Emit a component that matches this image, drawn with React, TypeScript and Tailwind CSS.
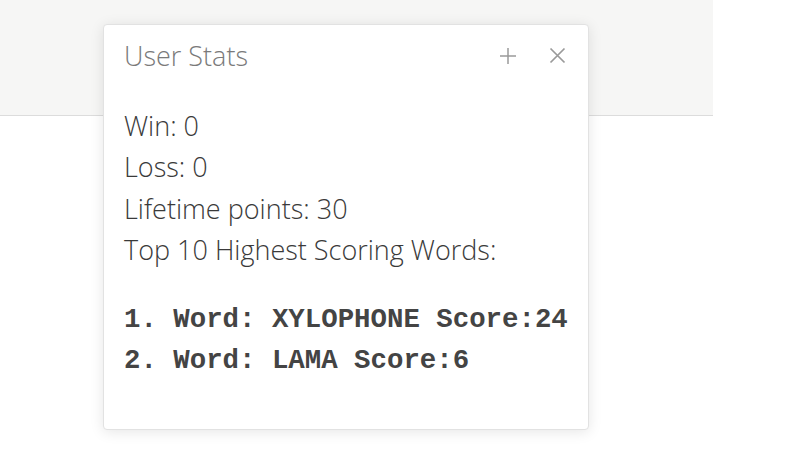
import React from "react";

export default function App() {
  return (
    <div className="relative w-[809px] h-[470px] bg-white overflow-hidden" style={{ fontFamily: '"Open Sans", sans-serif' }}>
      <div className="w-[713px] h-[116px] bg-[#f6f6f5] border-b border-[#dcdcdc]" />
      <div className="absolute left-[103px] top-[24px] w-[486px] h-[406px] bg-white rounded-[4px] border border-[#e2e2e2] shadow-[0_2px_14px_rgba(0,0,0,0.10)] px-[20px] pt-[10px]">
        <div className="flex items-center justify-between">
          <div className="text-[27px] leading-[41.5px] font-light text-[#7a7a7a]">User Stats</div>
          <div className="flex items-center gap-[32px] pr-[2px] text-[#9a9a9a]">
            <svg width="18" height="18" viewBox="0 0 18 18" fill="none" stroke="currentColor" strokeWidth="1.5">
              <path d="M9 1v16M1 9h16" />
            </svg>
            <svg width="17" height="17" viewBox="0 0 17 17" fill="none" stroke="currentColor" strokeWidth="1.7">
              <path d="M1.5 1.5l14 14M15.5 1.5l-14 14" />
            </svg>
          </div>
        </div>
        <div className="mt-[28px] text-[27px] leading-[41.5px] font-light text-[#3a3a3a]">
          <div>Win: 0</div>
          <div>Loss: 0</div>
          <div>Lifetime points: 30</div>
          <div>Top 10 Highest Scoring Words:</div>
        </div>
        <div className="mt-[28px] text-[27.4px] leading-[41px] font-bold text-[#444444]" style={{ fontFamily: '"Liberation Mono", monospace' }}>
          <div>1. Word: XYLOPHONE Score:24</div>
          <div>2. Word: LAMA Score:6</div>
        </div>
      </div>
    </div>
  );
}
